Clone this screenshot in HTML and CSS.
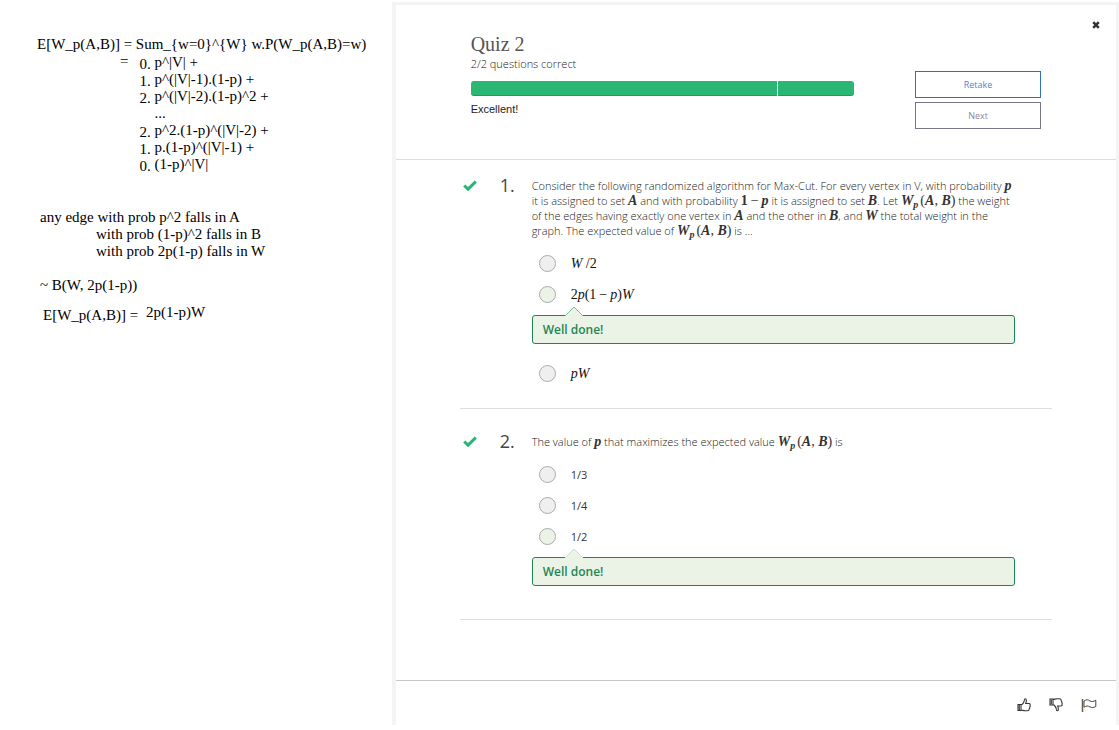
FILE: index.html
```html
<!DOCTYPE html>
<html lang="en">
<head>
<meta charset="utf-8">
<title>Quiz 2</title>
<link rel="stylesheet" href="styles.css">
</head>
<body>
<aside class="notes">
  <p class="note-lead">E[W_p(A,B)] = Sum_{w=0}^{W} w.P(W_p(A,B)=w)</p>
  <div class="expansion">
    <span class="equals">=</span>
    <div class="terms">
      <span class="index">0.</span><span>p^|V| +</span>
      <span class="index">1.</span><span>p^(|V|-1).(1-p) +</span>
      <span class="index">2.</span><span>p^(|V|-2).(1-p)^2 +</span>
      <span class="index"></span><span>...</span>
      <span class="index">2.</span><span>p^2.(1-p)^(|V|-2) +</span>
      <span class="index">1.</span><span>p.(1-p)^(|V|-1) +</span>
      <span class="index">0.</span><span>(1-p)^|V|</span>
    </div>
  </div>
  <div class="edges">
    <p>any edge with prob p^2 falls in A</p>
    <p class="indent">with prob (1-p)^2 falls in B</p>
    <p class="indent">with prob 2p(1-p) falls in W</p>
  </div>
  <p class="distribution">~ B(W, 2p(1-p))</p>
  <p class="result"><span>E[W_p(A,B)] =</span><span class="answer">2p(1-p)W</span></p>
</aside>

<main class="panel">
  <header class="quiz-header">
    <button class="close" type="button" aria-label="Close">
      <svg width="8" height="8" viewBox="0 0 8 8"><path d="M1.2 1.2l5.6 5.6M6.8 1.2L1.2 6.8" stroke="#333" stroke-width="2.5"/></svg>
    </button>
    <div class="summary">
      <h1>Quiz 2</h1>
      <p class="score">2/2 questions correct</p>
      <div class="progress"><span class="bar bar-main"></span><span class="bar bar-rest"></span></div>
      <p class="verdict">Excellent!</p>
    </div>
    <div class="actions">
      <button class="action retake" type="button">Retake</button>
      <button class="action next" type="button">Next</button>
    </div>
  </header>

  <div class="questions">
    <section class="question">
      <svg class="tick" width="14" height="11" viewBox="0 0 14 11"><path d="M1.2 5.5L5.1 9.2L12.8 1.5" fill="none" stroke="#2ab673" stroke-width="3.1"/></svg>
      <span class="number">1.</span>
      <div class="content">
        <p class="prompt">Consider the following randomized algorithm for Max-Cut. For every vertex in V, with probability <span class="math"><i>p</i></span> it is assigned to set <span class="math"><i>A</i></span> and with probability <span class="math"><b>1</b><span class="op">−</span><i>p</i></span> it is assigned to set <span class="math"><i>B</i></span>. Let <span class="math"><i>W</i><sub>p</sub><span class="paren">(</span><i>A</i>, <i>B</i>)</span> the weight of the edges having exactly one vertex in <span class="math"><i>A</i></span> and the other in <span class="math"><i>B</i></span>, and <span class="math"><i>W</i></span> the total weight in the graph. The expected value of <span class="math"><i>W</i><sub>p</sub><span class="paren">(</span><i>A</i>, <i>B</i>)</span> is ...</p>
        <div class="options">
          <label class="option"><input type="radio" name="q1"><span class="math regular"><i>W</i> /2</span></label>
          <label class="option"><input class="right" type="radio" name="q1"><span class="math regular">2<i>p</i>(1<span class="op">−</span><i>p</i>)<i>W</i></span></label>
          <div class="feedback"><svg class="arrow" width="20" height="11" viewBox="0 0 20 11"><path d="M1 10L10 1l9 9v1H1z" fill="#ebf3e7"/><path d="M1 10L10 1l9 9" fill="none" stroke="#74c69c"/></svg>Well done!</div>
          <label class="option"><input type="radio" name="q1"><span class="math regular"><i>pW</i></span></label>
        </div>
      </div>
    </section>

    <section class="question">
      <svg class="tick" width="14" height="11" viewBox="0 0 14 11"><path d="M1.2 5.5L5.1 9.2L12.8 1.5" fill="none" stroke="#2ab673" stroke-width="3.1"/></svg>
      <span class="number">2.</span>
      <div class="content">
        <p class="prompt">The value of <span class="math"><i>p</i></span> that maximizes the expected value <span class="math"><i>W</i><sub>p</sub><span class="paren">(</span><i>A</i>, <i>B</i>)</span> is</p>
        <div class="options">
          <label class="option"><input type="radio" name="q2"><span>1/3</span></label>
          <label class="option"><input type="radio" name="q2"><span>1/4</span></label>
          <label class="option"><input class="right" type="radio" name="q2"><span>1/2</span></label>
          <div class="feedback"><svg class="arrow" width="20" height="11" viewBox="0 0 20 11"><path d="M1 10L10 1l9 9z" fill="#ebf3e7"/><path d="M1 10L10 1l9 9" fill="none" stroke="#c5e2d0"/></svg>Well done!</div>
        </div>
      </div>
    </section>
  </div>

  <footer class="quiz-footer">
    <button class="icon" type="button" aria-label="Like">
      <svg width="14" height="16" viewBox="0 0 14 16"><path d="M1 7.5h3v6H1zM4 7.5h1C6 6.5 7 5.2 7.200 3.800C7.300 2.500 7.400 1.700 8.200 1.700c1.400 0 1.500 2.300.5 4.800h3.300c1 0 1.400.8 1 1.600c.4.800.2 1.500-.3 2c.2.800 0 1.400-.5 1.800c0 1.200-.7 1.800-1.900 1.800H8c-1.500 0-2.500-.7-4-.7" fill="none" stroke="#333" stroke-width="1.100"/><path d="M1.500 8h1.500v5H1.500z" fill="#555"/></svg>
    </button>
    <button class="icon" type="button" aria-label="Dislike">
      <svg width="14" height="16" viewBox="0 0 14 16"><g transform="matrix(1 0 0 -1 0 15.500)"><path d="M1 7.500h3v6H1zM4 7.500h1C6 6.500 7 5.200 7.200 3.800C7.300 2.500 7.400 1.700 8.200 1.700c1.400 0 1.500 2.300.5 4.800h3.300c1 0 1.400.8 1 1.600c.4.800.2 1.500-.3 2c.2.800 0 1.400-.5 1.800c0 1.200-.7 1.800-1.900 1.800H8c-1.500 0-2.500-.7-4-.7" fill="none" stroke="#333" stroke-width="1.100"/><path d="M1.500 8h1.500v5H1.500z" fill="#555"/></g></svg>
    </button>
    <button class="icon" type="button" aria-label="Report">
      <svg width="16" height="14" viewBox="0 0 16 14"><path d="M1.500 1v13" stroke="#6b5a48" stroke-width="1.500"/><path d="M3 3c2.500-1.600 4-1.600 6 0c2 .9 3.500.6 5.800-.7v6.200c-2.300 1.200-3.800 1.400-5.800.4c-2-1.200-3.500-1.200-6 .3z" fill="none" stroke="#444"/></svg>
    </button>
  </footer>
</main>
</body>
</html>
```
FILE: styles.css
```css
* { box-sizing: border-box; }

body {
  margin: 0;
  min-height: 100vh;
  display: grid;
  grid-template-columns: 35% 1fr;
  background: #fff;
  color: #333;
  font-family: "Open Sans", sans-serif;
  font-size: 11px;
  line-height: 15px;
}

p, h1 { margin: 0; }

button {
  font: inherit;
  background: none;
  border: 0;
  padding: 0;
  cursor: pointer;
}

/* Notes */
.notes {
  padding: 36px 0 0 37px;
  color: #000;
  font-family: "Liberation Serif", serif;
  font-size: 15px;
  line-height: 17px;
  white-space: nowrap;
}

.expansion { display: flex; padding-left: 83px; gap: 11px; }
.terms {
  display: grid;
  grid-template-columns: 15px auto;
  padding-top: 1px;
}
.index { padding-top: 2px; height: 17px; }
.edges { margin: 36px 0 0 3px; }
.indent { padding-left: 56px; }
.distribution { margin: 17px 0 0 3px; }
.result { display: flex; gap: 8px; margin: 10px 0 0 6px; }
.result > span:first-child { padding-top: 3px; }

/* Quiz panel */
.panel {
  display: flex;
  flex-direction: column;
  margin: 2px 0 5px;
  border: solid #f4f4f4;
  border-width: 3px 3px 0 4px;
}

.quiz-header {
  position: relative;
  display: flex;
  gap: 61px;
  padding: 28px 75px 29px;
  border-bottom: 1px solid #ddd;
}
.close {
  position: absolute;
  top: 12px;
  right: 16px;
  width: 8px;
  height: 15px;
}
.close svg, .icon svg { display: block; }

.summary { flex: 1; }
h1 {
  font: 400 20px/23px "Liberation Serif", serif;
  color: #555;
}
.score { color: #222; font-weight: 300; }
.progress {
  display: flex;
  gap: 1px;
  height: 15px;
  margin: 10px 0 6px;
}
.bar { background: #2ab673; border-bottom: 1px solid #219a5f; }
.bar-main { flex: 4; border-radius: 3px 0 0 3px; }
.bar-rest { flex: 1; border-radius: 0 3px 3px 0; }
.verdict { padding-bottom: 13px; font-family: "Liberation Sans", sans-serif; color: #222; }

.actions {
  display: flex;
  flex-direction: column;
  gap: 4px;
  width: 126px;
  padding-top: 38px;
}
.action { height: 27px; border: 1px solid; font-size: 9px; }
.retake { color: #5f7fc0; border-color: #2a72bd; }
.next { color: #8a8596; border-color: #7a7488; }

.questions { flex: 1; padding: 0 64px; }
.question {
  display: grid;
  grid-template-columns: 37px 32px 1fr;
  padding: 25px 37px 19px 3px;
  border-bottom: 1px solid #ddd;
}
.question:first-child { padding-top: 18px; }
.tick { margin-top: 2px; }
.number { font-size: 18px; color: #444; }
.prompt { color: #222; font-weight: 300; }

.math {
  font-family: "Liberation Serif", serif;
  font-size: 14px;
  font-weight: 400;
  line-height: 0;
  white-space: nowrap;
  color: #333;
}
.math i, .math b { font-weight: 700; }
.math sub {
  font-size: 10px;
  line-height: 0;
  font-weight: 700;
  font-style: italic;
  vertical-align: -3px;
}
.math.regular, .math.regular i { font-weight: 400; color: #111; }
.paren { padding-left: 2px; }
.op { padding: 0 3px; }

.options { margin-top: 10px; }
.option {
  display: flex;
  align-items: center;
  gap: 15px;
  height: 31px;
  padding-left: 7px;
}
.option input {
  appearance: none;
  width: 17px;
  height: 17px;
  margin: 0;
  border: 1px solid #aaa;
  border-radius: 50%;
  background: #efefef;
}
.option input.right { background: #ebf3e7; }

.feedback {
  position: relative;
  margin: 5px 0 14px;
  padding: 6px 10px;
  border: 1px solid #1f8653;
  border-radius: 3px;
  background: #ebf3e7;
  color: #1f8653;
  font-size: 12px;
  font-weight: 600;
}
.arrow { position: absolute; top: -10px; left: 31px; }

.quiz-footer {
  display: flex;
  justify-content: flex-end;
  align-items: center;
  gap: 18px;
  height: 45px;
  padding: 3px 19px 0;
  border-top: 1px solid #c8c8c8;
}
```
